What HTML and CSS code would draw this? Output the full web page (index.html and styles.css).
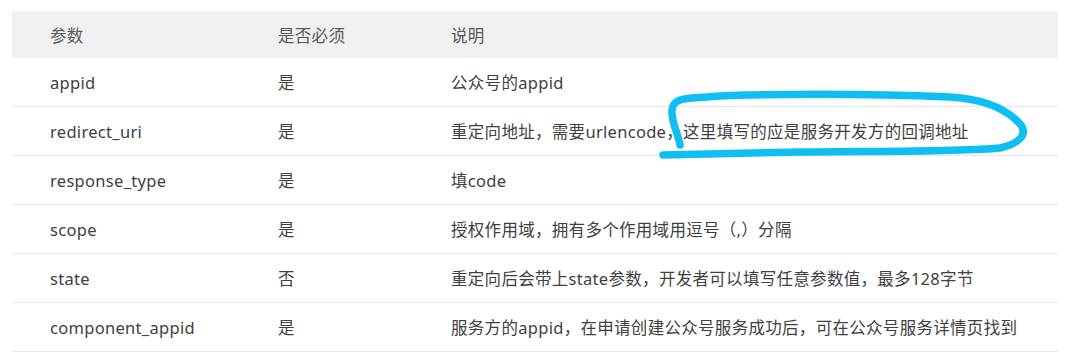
FILE: index.html
```html
<!DOCTYPE html>
<html lang="zh-CN">
<head>
<meta charset="utf-8">
<link rel="stylesheet" href="styles.css">
</head>
<body>
<div class="page">
  <table class="params">
    <thead>
      <tr><th class="c1">参数</th><th class="c2">是否必须</th><th class="c3">说明</th></tr>
    </thead>
    <tbody>
      <tr><td>appid</td><td>是</td><td>公众号的appid</td></tr>
      <tr><td>redirect_uri</td><td>是</td><td>重定向地址，需要urlencode，这里填写的应是服务开发方的回调地址</td></tr>
      <tr><td>response_type</td><td>是</td><td>填code</td></tr>
      <tr><td>scope</td><td>是</td><td>授权作用域，拥有多个作用域用逗号（,）分隔</td></tr>
      <tr><td>state</td><td>否</td><td>重定向后会带上state参数，开发者可以填写任意参数值，最多128字节</td></tr>
      <tr><td>component_appid</td><td>是</td><td>服务方的appid，在申请创建公众号服务成功后，可在公众号服务详情页找到</td></tr>
    </tbody>
  </table>
  <svg class="mark" width="1080" height="356" viewBox="0 0 1080 356" aria-hidden="true">
    <path d="M680 145 C 678 133, 671 122, 672 110 C 673 101, 680 99, 692 98 C 710 97, 725 95, 745 95 C 800 94, 880 94, 950 97 C 985 99, 1008 110, 1021 125 C 1028 135, 1018 144, 1000 148 C 960 152, 880 151, 800 152 C 740 153, 700 154, 663 155" fill="none" stroke="#0fbff4" stroke-width="7.5" stroke-linecap="round" stroke-linejoin="round"/>
  </svg>
</div>
</body>
</html>
```

FILE: styles.css
```css
html, body {
  margin: 0;
  padding: 0;
  background: #ffffff;
}

.page {
  position: relative;
  width: 1080px;
  height: 356px;
  padding: 11px 0 0 12px;
  box-sizing: border-box;
  overflow: hidden;
}

.params {
  width: 1046px;
  border-collapse: collapse;
  table-layout: fixed;
  font-family: "Noto Sans", "Noto Sans CJK SC", sans-serif;
  font-size: 16.5px;
  letter-spacing: 0.3px;
  color: #404040;
}

.params th,
.params td {
  text-align: left;
  font-weight: normal;
  padding: 0 0 0 38px;
  white-space: nowrap;
  vertical-align: middle;
}

.params thead th {
  background: #f0f0f0;
  color: #585858;
  height: 47px;
}

.params .c1 { width: 190px; }
.params .c2 { width: 135px; }

.params tbody td {
  height: 48px;
  border-bottom: 1px solid #e9e9e9;
}

.mark {
  position: absolute;
  left: 0;
  top: 0;
  pointer-events: none;
}
```
